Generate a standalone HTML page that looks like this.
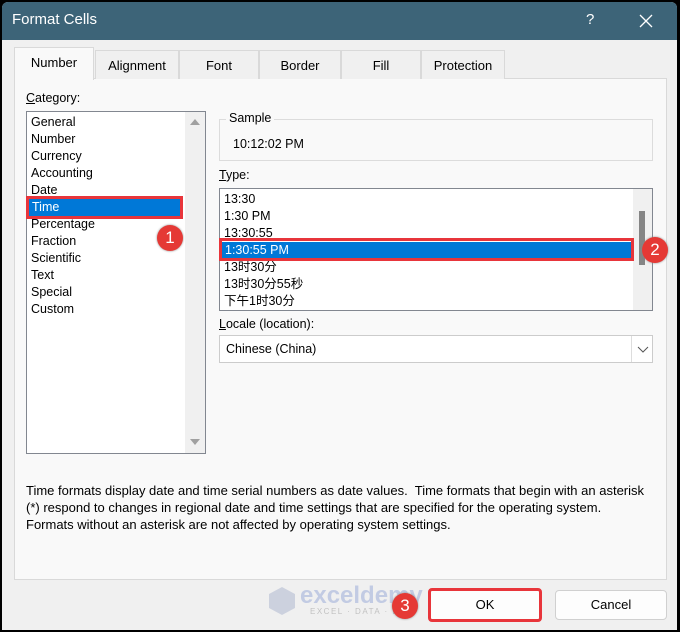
<!DOCTYPE html>
<html><head><meta charset="utf-8"><style>
*{box-sizing:border-box;margin:0;padding:0}
body{width:680px;height:632px;background:#000;position:relative;overflow:hidden;font-family:"Segoe UI","Liberation Sans","Noto Sans CJK SC",sans-serif;font-size:12px;color:#000}
.a{position:absolute;white-space:nowrap}
#dlg{left:2px;top:2px;width:675px;height:628px;background:#f0f0f0;border-radius:6px 6px 0 0;overflow:hidden}
#title{left:0;top:0;width:675px;height:38px;background:#3d6478;color:#fff;font-size:15px}
.tab{top:48px;height:29px;border:1px solid #d9d9d9;border-bottom:none;background:#f0f0f0;text-align:center;line-height:29px;font-size:13px}
#panel{left:12px;top:76px;width:653px;height:502px;background:#f9f9f9;border:1px solid #d9d9d9}
.list{background:#fff;border:1px solid #828790}
.it{position:absolute;left:4px;font-size:12.5px;line-height:17px;height:17px}
.sel{background:#0078d7;color:#fff}
.red{border:3px solid #e8353b}
.badge{width:26px;height:26px;border-radius:50%;background:#e53935;color:#fff;font-size:17px;text-align:center;line-height:26px;box-shadow:0 0 2px #888}
.btn{top:588px;height:30px;border:1px solid #d0d0d0;background:#fdfdfd;border-radius:4px;text-align:center;line-height:28px;font-size:13px}
</style></head><body>
<div id="dlg" class="a">
<div id="title" class="a"><span class="a" style="left:10px;top:9px">Format Cells</span><span class="a" style="left:584px;top:9px;font-size:15px">?</span>
<svg class="a" style="left:637px;top:12px" width="14" height="14"><path d="M1 1L13 13M13 1L1 13" stroke="#fff" stroke-width="1.3"/></svg></div>
<div id="panel" class="a"></div>
<div class="a tab" style="left:12px;top:45px;height:33px;width:80px;background:#f9f9f9;line-height:30px;z-index:2">Number</div>
<div class="a tab" style="left:93px;width:84px">Alignment</div>
<div class="a tab" style="left:177px;width:80px">Font</div>
<div class="a tab" style="left:257px;width:82px">Border</div>
<div class="a tab" style="left:339px;width:80px">Fill</div>
<div class="a tab" style="left:419px;width:84px">Protection</div>
<div class="a" style="left:24px;top:89px;font-size:12.5px"><u>C</u>ategory:</div>
<div class="a list" style="left:24px;top:109px;width:180px;height:343px">
<div class="a" style="left:158px;top:0;width:20px;height:341px;background:#f0f0f0"></div>
<svg class="a" style="left:162px;top:6px" width="12" height="8"><path d="M1 7L6 1L11 7Z" fill="#a0a0a0"/></svg>
<svg class="a" style="left:162px;top:326px" width="12" height="8"><path d="M1 1L6 7L11 1Z" fill="#a0a0a0"/></svg>
<div class="it" style="top:2px">General</div><div class="it" style="top:19px">Number</div><div class="it" style="top:36px">Currency</div><div class="it" style="top:53px">Accounting</div><div class="it" style="top:70px">Date</div>
<div class="it sel" style="top:87px;left:2px;width:152px;padding-left:3px">Time</div>
<div class="it" style="top:104px">Percentage</div><div class="it" style="top:121px">Fraction</div><div class="it" style="top:138px">Scientific</div><div class="it" style="top:155px">Text</div><div class="it" style="top:172px">Special</div><div class="it" style="top:189px">Custom</div>
</div>
<div class="a red" style="left:24px;top:194px;width:157px;height:23px"></div>
<div class="a badge" style="left:155px;top:223px">1</div>
<div class="a" style="left:217px;top:117px;width:434px;height:42px;border:1px solid #dcdcdc"></div>
<div class="a" style="left:224px;top:109px;background:#f9f9f9;padding:0 3px;font-size:12.5px">Sample</div>
<div class="a" style="left:231px;top:135px;font-size:12.5px">10:12:02 PM</div>
<div class="a" style="left:217px;top:166px;font-size:12.5px"><u>T</u>ype:</div>
<div class="a list" style="left:217px;top:186px;width:434px;height:123px">
<div class="a" style="left:413px;top:0;width:19px;height:121px;background:#f0f0f0"></div>
<div class="a" style="left:419px;top:22px;width:6px;height:54px;background:#858585"></div>
<div class="it" style="top:2px">13:30</div><div class="it" style="top:19px">1:30 PM</div><div class="it" style="top:36px">13:30:55</div>
<div class="it sel" style="top:53px;left:2px;width:410px;padding-left:3px">1:30:55 PM</div>
<div class="it" style="top:70px">13时30分</div><div class="it" style="top:87px">13时30分55秒</div><div class="it" style="top:104px">下午1时30分</div>
</div>
<div class="a red" style="left:217px;top:236px;width:415px;height:23px"></div>
<div class="a badge" style="left:640px;top:235px">2</div>
<div class="a" style="left:217px;top:315px;font-size:12.5px"><u>L</u>ocale (location):</div>
<div class="a" style="left:217px;top:333px;width:434px;height:28px;background:#fff;border:1px solid #ccc">
<span class="a" style="left:6px;top:6px;font-size:12.5px">Chinese (China)</span>
<div class="a" style="left:411px;top:0;width:1px;height:26px;background:#ddd"></div>
<svg class="a" style="left:417px;top:10px" width="12" height="8"><path d="M1 1L6 6L11 1" stroke="#555" fill="none"/></svg></div>
<div class="a" style="left:24px;top:480px;font-size:13px;line-height:17px;width:645px">Time formats display date and time serial numbers as date values.&nbsp; Time formats that begin with an asterisk<br>(*) respond to changes in regional date and time settings that are specified for the operating system.<br>Formats without an asterisk are not affected by operating system settings.</div>
<div class="a" style="left:266px;top:582px;width:140px;height:36px;opacity:.3">
<svg class="a" style="left:0;top:2px" width="28" height="30"><path d="M14 1L27 8V22L14 29L1 22V8Z" fill="#7d8db8"/></svg>
<span class="a" style="left:32px;top:-2px;font-size:24px;font-weight:bold;color:#5a78c8">exceldemy</span>
<span class="a" style="left:42px;top:23px;font-size:8px;color:#555;letter-spacing:1.5px">EXCEL · DATA · BI</span></div>
<div class="a badge" style="left:390px;top:591px">3</div>
<div class="a btn" style="left:426px;top:586px;width:114px;height:34px;border:3px solid #e8353b;line-height:28px">OK</div>
<div class="a btn" style="left:553px;width:112px">Cancel</div>
</div>
</body></html>
